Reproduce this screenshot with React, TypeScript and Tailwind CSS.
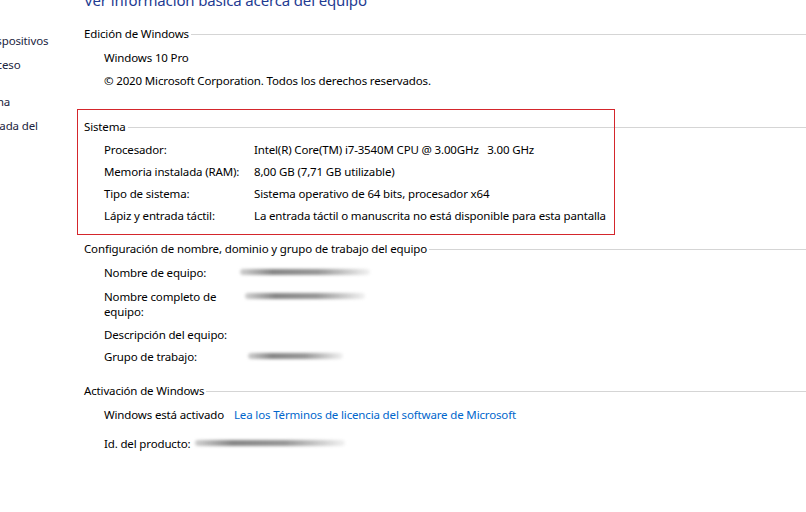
import React from "react";

const FONT = { fontFamily: '"Noto Sans", "Segoe UI", Arial, sans-serif', letterSpacing: "-0.15px" };

function Heading({ children, className = "" }: { children: React.ReactNode; className?: string }) {
  return (
    <div className={"flex items-center leading-[15px] " + className}>
      <span className="whitespace-nowrap text-black">{children}</span>
      <div className="ml-[2px] mt-[2px] h-px flex-1 bg-[#d5d5d5]" />
    </div>
  );
}

function Row({ label, children, className = "" }: { label: React.ReactNode; children?: React.ReactNode; className?: string }) {
  return (
    <div className={"flex pl-[20px] leading-[15px] " + className}>
      <div className="w-[150px] shrink-0 whitespace-nowrap">{label}</div>
      <div className="flex-1 whitespace-nowrap">{children}</div>
    </div>
  );
}

function Blur({ w, ml = 0, dark = "#858585" }: { w: number; ml?: number; dark?: string }) {
  return (
    <div className="relative h-[15px]" style={{ marginLeft: ml }}>
      <div
        className="absolute top-[4px] h-[6px] rounded-full blur-[1.5px]"
        style={{ width: w, background: `linear-gradient(90deg, rgba(160,160,160,0.5), ${dark} 25%, #969696 60%, rgba(190,190,190,0.2))` }}
      />
    </div>
  );
}

export default function App() {
  return (
    <div className="relative h-[512px] w-[806px] overflow-hidden bg-white text-[11.5px] text-black" style={FONT}>
      <div className="flex">
        {/* Left navigation (mostly clipped) */}
        <div className="-ml-[108px] w-[192px] shrink-0 pt-[33px] leading-[15px] text-[#1a2440]">
          <div className="whitespace-nowrap">Administrador de dispositivos</div>
          <div className="mt-[9px] whitespace-nowrap">
            Configuración de acceso
            <br />
            remoto
          </div>
          <div className="mt-[7px] whitespace-nowrap">Protección del sistema</div>
          <div className="mt-[9px] whitespace-nowrap">
            Configuración avanzada del
            <br />
            sistema
          </div>
        </div>

        {/* Main content */}
        <div className="flex-1">
          <div className="-mt-[10px] whitespace-nowrap text-[15px] leading-[20px] text-[#1f3c92]">
            Ver información básica acerca del equipo
          </div>

          <Heading className="mt-[16px]">Edición de Windows</Heading>
          <div className="mt-[9px] pl-[20px] leading-[15px]">Windows 10 Pro</div>
          <div className="mt-[8px] whitespace-nowrap pl-[20px] leading-[15px]">
            © 2020 Microsoft Corporation. Todos los derechos reservados.
          </div>

          <Heading className="mt-[31px]">Sistema</Heading>
          <Row className="mt-[8px]" label="Procesador:">
            Intel(R) Core(TM) i7-3540M CPU @ 3.00GHz&nbsp;&nbsp;&nbsp;3.00 GHz
          </Row>
          <Row className="mt-[7px]" label="Memoria instalada (RAM):">
            8,00 GB (7,71 GB utilizable)
          </Row>
          <Row className="mt-[7px]" label="Tipo de sistema:">
            Sistema operativo de 64 bits, procesador x64
          </Row>
          <Row className="mt-[7px]" label="Lápiz y entrada táctil:">
            La entrada táctil o manuscrita no está disponible para esta pantalla
          </Row>

          <Heading className="mt-[18px]">Configuración de nombre, dominio y grupo de trabajo del equipo</Heading>
          <Row className="mt-[9px]" label="Nombre de equipo:">
            <Blur w={130} ml={-14} />
          </Row>
          <Row className="mt-[9px]" label={<>Nombre completo de<br />equipo:</>}>
            <Blur w={120} ml={-9} />
          </Row>
          <Row className="mt-[8px]" label="Descripción del equipo:" />
          <Row className="mt-[7px]" label="Grupo de trabajo:">
            <Blur w={95} ml={-6} />
          </Row>

          <Heading className="mt-[19px]">Activación de Windows</Heading>
          <div className="mt-[9px] flex whitespace-nowrap pl-[20px] leading-[15px]">
            <span>Windows está activado</span>
            <span className="ml-[10px] text-[#0066cc]">Lea los Términos de licencia del software de Microsoft</span>
          </div>
          <div className="mt-[14px] flex whitespace-nowrap pl-[20px] leading-[15px]">
            <span>Id. del producto:</span>
            <div className="ml-[5px]">
              <Blur w={150} />
            </div>
          </div>
        </div>
      </div>

      {/* Red annotation box */}
      <div className="pointer-events-none absolute left-[77px] top-[109px] h-[126px] w-[538px] border border-[#d4262c]" />
    </div>
  );
}
